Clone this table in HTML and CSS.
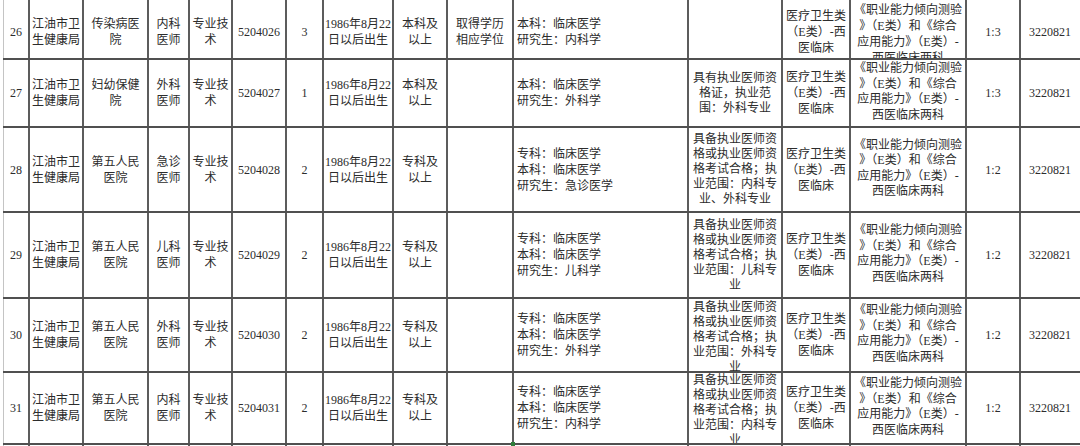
FILE: index.html
```html
<!DOCTYPE html>
<html lang="zh-CN">
<head>
<meta charset="utf-8">
<title>岗位表</title>
<link rel="stylesheet" href="styles.css">
</head>
<body>
<div class="sheet">
  <div class="row r1">
    <div>26</div>
    <div>江油市卫<br>生健康局</div>
    <div>传染病医<br>院</div>
    <div>内科<br>医师</div>
    <div>专业技<br>术</div>
    <div>5204026</div>
    <div>3</div>
    <div>1986年8月22<br>日以后出生</div>
    <div>本科及<br>以上</div>
    <div>取得学历<br>相应学位</div>
    <div class="major">本科：临床医学<br>研究生：内科学</div>
    <div class="cert"></div>
    <div>医疗卫生类<br>（E类）-西<br>医临床</div>
    <div class="exam">《职业能力倾向测验<br>》（E类）和《综合<br>应用能力》（E类）-<br>西医临床两科</div>
    <div>1:3</div>
    <div>3220821</div>
  </div>
  <div class="row r2">
    <div>27</div>
    <div>江油市卫<br>生健康局</div>
    <div>妇幼保健<br>院</div>
    <div>外科<br>医师</div>
    <div>专业技<br>术</div>
    <div>5204027</div>
    <div>1</div>
    <div>1986年8月22<br>日以后出生</div>
    <div>本科及<br>以上</div>
    <div></div>
    <div class="major">本科：临床医学<br>研究生：外科学</div>
    <div class="cert">具有执业医师资<br>格证，执业范<br>围：外科专业</div>
    <div>医疗卫生类<br>（E类）-西<br>医临床</div>
    <div class="exam">《职业能力倾向测验<br>》（E类）和《综合<br>应用能力》（E类）-<br>西医临床两科</div>
    <div>1:3</div>
    <div>3220821</div>
  </div>
  <div class="row r3">
    <div>28</div>
    <div>江油市卫<br>生健康局</div>
    <div>第五人民<br>医院</div>
    <div>急诊<br>医师</div>
    <div>专业技<br>术</div>
    <div>5204028</div>
    <div>2</div>
    <div>1986年8月22<br>日以后出生</div>
    <div>专科及<br>以上</div>
    <div></div>
    <div class="major">专科：临床医学<br>本科：临床医学<br>研究生：急诊医学</div>
    <div class="cert">具备执业医师资<br>格或执业医师资<br>格考试合格；执<br>业范围：内科专<br>业、外科专业</div>
    <div>医疗卫生类<br>（E类）-西<br>医临床</div>
    <div class="exam">《职业能力倾向测验<br>》（E类）和《综合<br>应用能力》（E类）-<br>西医临床两科</div>
    <div>1:2</div>
    <div>3220821</div>
  </div>
  <div class="row r4">
    <div>29</div>
    <div>江油市卫<br>生健康局</div>
    <div>第五人民<br>医院</div>
    <div>儿科<br>医师</div>
    <div>专业技<br>术</div>
    <div>5204029</div>
    <div>2</div>
    <div>1986年8月22<br>日以后出生</div>
    <div>专科及<br>以上</div>
    <div></div>
    <div class="major">专科：临床医学<br>本科：临床医学<br>研究生：儿科学</div>
    <div class="cert">具备执业医师资<br>格或执业医师资<br>格考试合格；执<br>业范围：儿科专<br>业</div>
    <div>医疗卫生类<br>（E类）-西<br>医临床</div>
    <div class="exam">《职业能力倾向测验<br>》（E类）和《综合<br>应用能力》（E类）-<br>西医临床两科</div>
    <div>1:2</div>
    <div>3220821</div>
  </div>
  <div class="row r5">
    <div>30</div>
    <div>江油市卫<br>生健康局</div>
    <div>第五人民<br>医院</div>
    <div>外科<br>医师</div>
    <div>专业技<br>术</div>
    <div>5204030</div>
    <div>2</div>
    <div>1986年8月22<br>日以后出生</div>
    <div>专科及<br>以上</div>
    <div></div>
    <div class="major">专科：临床医学<br>本科：临床医学<br>研究生：外科学</div>
    <div class="cert">具备执业医师资<br>格或执业医师资<br>格考试合格；执<br>业范围：外科专<br>业</div>
    <div>医疗卫生类<br>（E类）-西<br>医临床</div>
    <div class="exam">《职业能力倾向测验<br>》（E类）和《综合<br>应用能力》（E类）-<br>西医临床两科</div>
    <div>1:2</div>
    <div>3220821</div>
  </div>
  <div class="row r6">
    <div>31</div>
    <div>江油市卫<br>生健康局</div>
    <div>第五人民<br>医院</div>
    <div>内科<br>医师</div>
    <div>专业技<br>术</div>
    <div>5204031</div>
    <div>2</div>
    <div>1986年8月22<br>日以后出生</div>
    <div>专科及<br>以上</div>
    <div></div>
    <div class="major">专科：临床医学<br>本科：临床医学<br>研究生：内科学</div>
    <div class="cert">具备执业医师资<br>格或执业医师资<br>格考试合格；执<br>业范围：内科专<br>业</div>
    <div>医疗卫生类<br>（E类）-西<br>医临床</div>
    <div class="exam">《职业能力倾向测验<br>》（E类）和《综合<br>应用能力》（E类）-<br>西医临床两科</div>
    <div>1:2</div>
    <div>3220821</div>
  </div>
  <div class="row r7">
    <div></div><div></div><div></div><div></div><div></div><div></div><div></div><div></div>
    <div></div><div></div><div class="major"><span class="handle"></span></div><div></div><div></div><div></div><div></div><div></div>
  </div>
</div>
</body>
</html>
```

FILE: styles.css
```css
:root {
  --cols: 27px 54px 65px 41px 43px 54px 37px 70px 54px 66px 175px 94px 68px 116px 54px 58px;
}

html, body {
  margin: 0;
  padding: 0;
  background: #ffffff;
  overflow: hidden;
}

body {
  font-family: "Liberation Serif", "Noto Sans CJK SC", serif;
  font-size: 12px;
  color: #2c2c2c;
}

.sheet {
  display: flex;
  flex-direction: column;
  padding-left: 3px;
  width: 1077px;
}

.row {
  box-sizing: border-box;
  display: grid;
  grid-template-columns: var(--cols);
  border-bottom: 2px solid #505050;
}

.row > div {
  position: relative;
  display: flex;
  align-items: center;
  justify-content: center;
  text-align: center;
  overflow: hidden;
  line-height: 16px;
  white-space: nowrap;
  border-right: 2px solid #5c5c5c;
}

.row > div:first-child {
  border-left: 1px solid #c4c4c4;
}

.row > div:last-child {
  border-right: none;
}

.row > .major {
  justify-content: flex-start;
  text-align: left;
  padding-left: 3px;
}

.row > .cert {
  line-height: 15px;
}

.row > .exam {
  line-height: 15.5px;
  padding-bottom: 2px;
}

.r1 { height: 60px; }
.r1 > div { padding-top: 6px; }
.r1 > .exam {
  line-height: 16px;
  padding-top: 10px;
  padding-bottom: 0;
}
.r2 { height: 68px; }
.r3 { height: 85px; }
.r4 { height: 86px; }
.r5 { height: 74px; }
.r6 { height: 72px; }
.r5 > .cert,
.r6 > .cert { padding-top: 5px; }
.r7 { height: 4px; border-bottom: none; }

.r7 > .major { overflow: visible; }

.handle {
  position: absolute;
  left: -3px;
  top: -3px;
  width: 4px;
  height: 4px;
  background: #2f7d3a;
}
```
